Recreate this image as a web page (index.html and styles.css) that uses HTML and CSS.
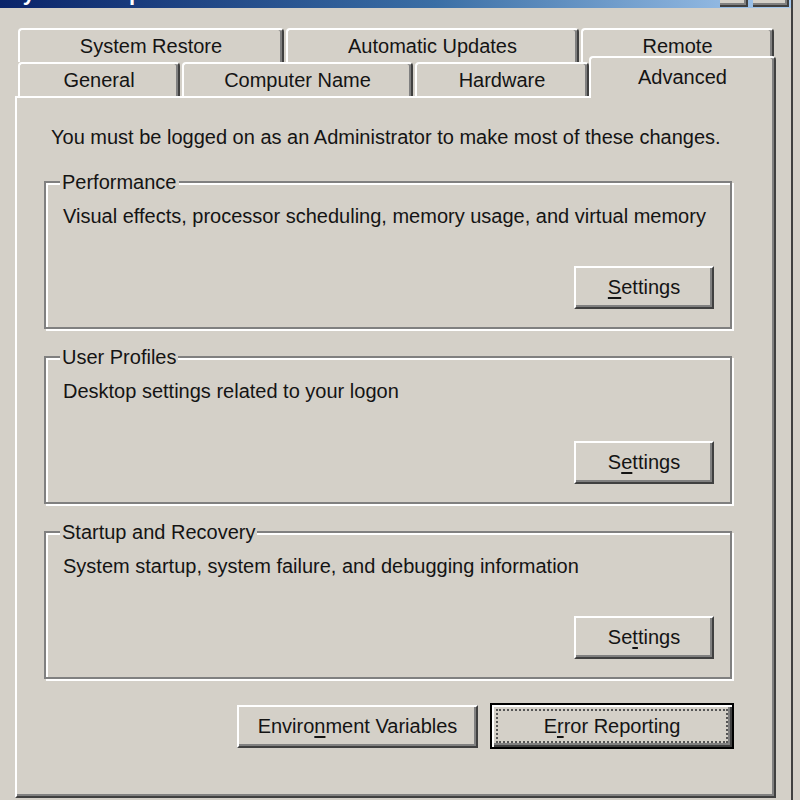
FILE: index.html
```html
<!DOCTYPE html>
<html lang="en">

<head>
    <meta charset="UTF-8">
    <meta name="viewport" content="width=device-width, initial-scale=1.0">
    <title>System Properties</title>
    <link rel="stylesheet" href="styles.css">
</head>

<body>
    <div class="window">
        <div class="titlebar">
            <span class="title">System Properties</span>
            <div class="title-buttons">
                <span class="tbtn help"></span>
                <span class="tbtn close"></span>
            </div>
        </div>

        <div class="dialog">
            <div class="tab-row back">
                <div class="tab w-restore">System Restore</div>
                <div class="tab w-updates">Automatic Updates</div>
                <div class="tab w-remote">Remote</div>
            </div>
            <div class="tab-row front">
                <div class="tab w-general">General</div>
                <div class="tab w-name">Computer Name</div>
                <div class="tab w-hardware">Hardware</div>
                <div class="tab w-advanced selected">Advanced</div>
            </div>

            <div class="panel">
                <p class="intro">You must be logged on as an Administrator to make most of these changes.</p>

                <fieldset class="group">
                    <legend>Performance</legend>
                    <p class="desc">Visual effects, processor scheduling, memory usage, and virtual memory</p>
                    <div class="actions">
                        <button class="btn settings"><u>S</u>ettings</button>
                    </div>
                </fieldset>

                <fieldset class="group">
                    <legend>User Profiles</legend>
                    <p class="desc">Desktop settings related to your logon</p>
                    <div class="actions">
                        <button class="btn settings">S<u>e</u>ttings</button>
                    </div>
                </fieldset>

                <fieldset class="group">
                    <legend>Startup and Recovery</legend>
                    <p class="desc">System startup, system failure, and debugging information</p>
                    <div class="actions">
                        <button class="btn settings">Se<u>t</u>tings</button>
                    </div>
                </fieldset>

                <div class="footer-buttons">
                    <button class="btn env">Enviro<u>n</u>ment Variables</button>
                    <button class="btn default"><span class="focus">E<u>r</u>ror Reporting</span></button>
                </div>
            </div>
        </div>
    </div>
</body>

</html>
```

FILE: styles.css
```css
html,
body {
    margin: 0;
    background-color: #d4d0c8;
}

body {
    font-family: 'Liberation Sans', Arial, sans-serif;
    font-size: 20px;
    color: #141414;
}

.window {
    width: 791px;
    height: 800px;
    display: flex;
    flex-direction: column;
    border-right: 2px solid #404040;
    background-color: #d4d0c8;
}

/* title bar, mostly cut off at the top of the shot */
.titlebar {
    height: 8px;
    display: flex;
    justify-content: space-between;
    align-items: flex-end;
    overflow: hidden;
    background: linear-gradient(to right, #0a246a 0%, #3a6ea5 55%, #a6caf0 100%);
}

.title {
    margin-left: 8px;
    margin-top: -18px;
    align-self: flex-start;
    font-weight: bold;
    font-size: 22px;
    line-height: 22px;
    color: #fff;
}

.title-buttons {
    display: flex;
    gap: 5px;
    margin-right: 2px;
    align-self: flex-start;
}

.tbtn {
    height: 5px;
    background-color: #d4d0c8;
    border-right: 2px solid #404040;
    border-bottom: 2px solid #404040;
    box-shadow: inset -2px -2px 0 #808080;
}

.tbtn.help {
    width: 26px;
}

.tbtn.close {
    width: 34px;
}

.dialog {
    flex: 1;
    display: flex;
    flex-direction: column;
    padding: 20px 15px 2px 15px;
}

/* tabs */
.tab-row {
    display: flex;
    align-items: flex-start;
    gap: 2px;
    margin-left: 3px;
}

.tab {
    box-sizing: border-box;
    height: 34px;
    display: flex;
    align-items: center;
    justify-content: center;
    background-color: #d4d0c8;
    border-top: 2px solid #fff;
    border-left: 2px solid #fff;
    border-right: 2px solid #404040;
    border-radius: 4px 4px 0 0;
    box-shadow: inset -2px 0 0 #808080;
}

.w-restore { width: 266px; }
.w-updates { width: 293px; }
.w-remote { width: 193px; }
.w-general { width: 162px; }
.w-name { width: 231px; }
.w-hardware { width: 174px; }
.w-advanced { width: 187px; }

.tab.selected {
    position: relative;
    z-index: 1;
    height: 42px;
    margin-top: -6px;
    margin-bottom: -2px;
    margin-left: -2px;
    padding-bottom: 2px;
}

/* the tab page */
.panel {
    flex: 1;
    box-sizing: border-box;
    padding: 0 42px 0 27px;
    border: 2px solid;
    border-color: #fff #404040 #404040 #fff;
    box-shadow: inset -2px -2px 0 #808080;
}

.intro {
    margin: 27px 0 0 7px;
    line-height: 24px;
}

.group {
    margin: 21px 0 0 0;
    padding: 10px 16px 18px 17px;
    border: 2px solid #808080;
    box-shadow: inset 2px 2px 0 #fff, 2px 2px 0 #fff;
    min-width: 0;
}

.group + .group {
    margin-top: 16px;
}

.group legend {
    padding: 0 2px;
    margin-left: -3px;
    line-height: 24px;
    background-color: #d4d0c8;
}

.desc {
    margin: 0;
    line-height: 24px;
}

.actions {
    display: flex;
    justify-content: flex-end;
    margin-top: 38px;
}

/* classic 3d buttons */
.btn {
    box-sizing: border-box;
    height: 43px;
    padding: 0;
    font-family: inherit;
    font-size: 20px;
    color: #141414;
    background-color: #d4d0c8;
    border: 2px solid;
    border-color: #fff #404040 #404040 #fff;
    box-shadow: inset -2px -2px 0 #808080;
}

.btn u {
    text-underline-offset: 3px;
}

.settings {
    width: 140px;
}

.footer-buttons {
    display: flex;
    justify-content: flex-end;
    align-items: center;
    gap: 12px;
    margin: 24px -2px 0 0;
}

.env {
    width: 241px;
}

.btn.default {
    width: 244px;
    height: 46px;
    padding: 4px;
    border: 2px solid #000;
    box-shadow: inset 2px 2px 0 #fff, inset -2px -2px 0 #404040, inset -4px -4px 0 #808080;
}

.focus {
    display: flex;
    align-items: center;
    justify-content: center;
    height: 100%;
    box-sizing: border-box;
    border: 2px dotted #555;
}
```
